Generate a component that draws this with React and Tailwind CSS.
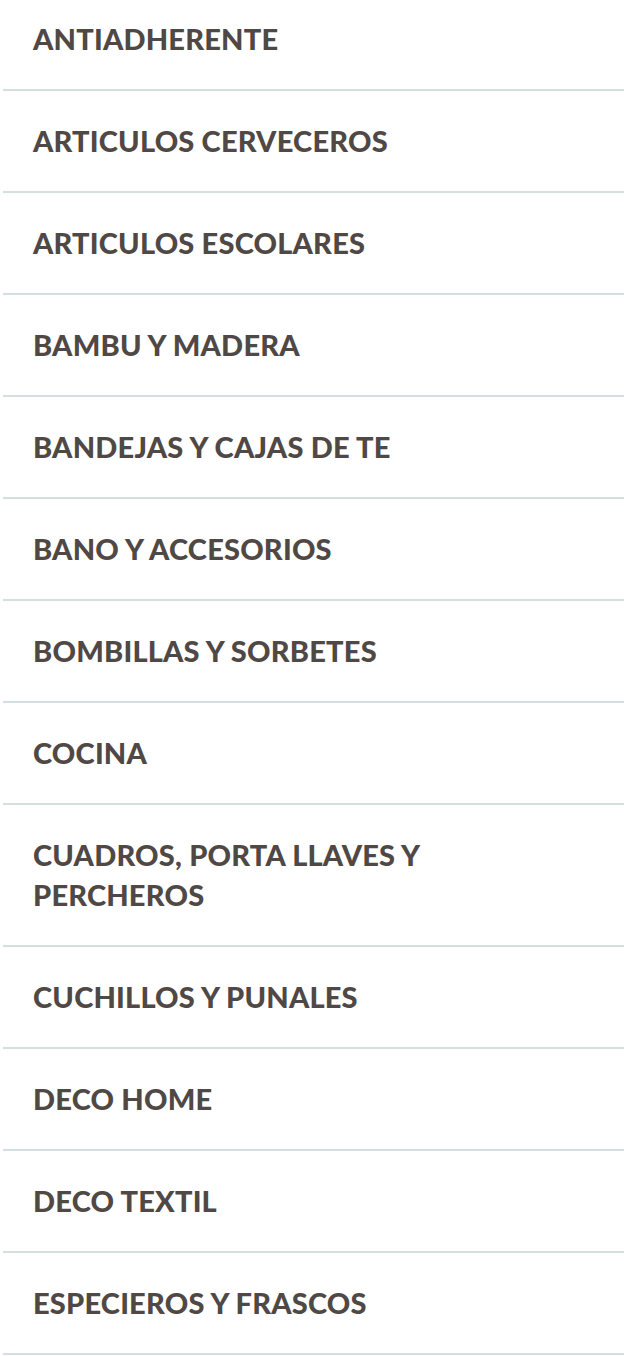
import React from 'react';

const CATEGORIES = [
  'ANTIADHERENTE',
  'ARTICULOS CERVECEROS',
  'ARTICULOS ESCOLARES',
  'BAMBU Y MADERA',
  'BANDEJAS Y CAJAS DE TE',
  'BANO Y ACCESORIOS',
  'BOMBILLAS Y SORBETES',
  'COCINA',
  'CUADROS, PORTA LLAVES Y PERCHEROS',
  'CUCHILLOS Y PUNALES',
  'DECO HOME',
  'DECO TEXTIL',
  'ESPECIEROS Y FRASCOS',
];

export default function App() {
  return (
    <div className="min-h-screen bg-white overflow-hidden">
      <ul className="-mt-[11px] ml-[3px]">
        {CATEGORIES.map((name) => (
          <li key={name} className="border-b-2 border-[#d5dfe0]">
            <a
              href="#"
              className="block py-[30px] pl-[30px] pr-[150px] text-[29px] leading-[40px] font-black tracking-[0.2px] text-[#4f4845] font-['Lato',sans-serif]"
            >
              {name}
            </a>
          </li>
        ))}
      </ul>
    </div>
  );
}
